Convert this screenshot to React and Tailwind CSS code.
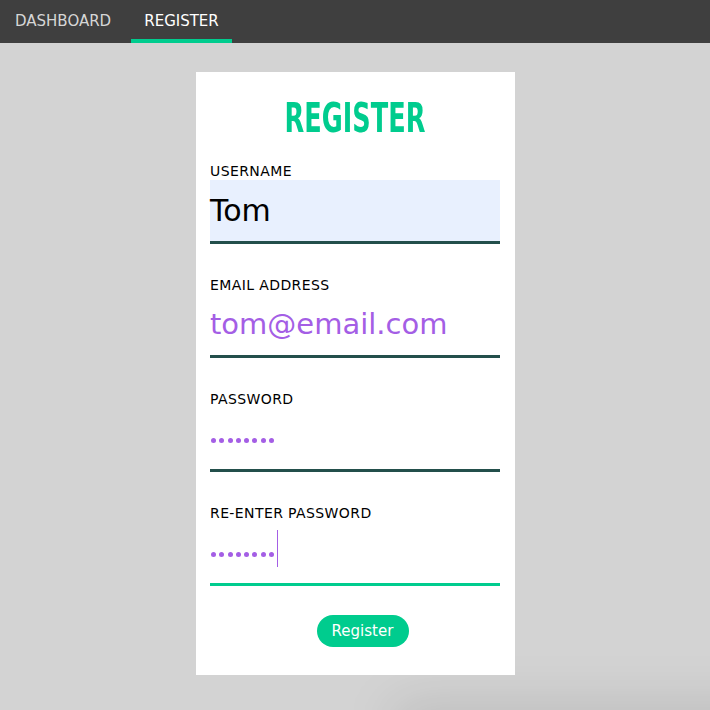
export default function App() {
  const fields = [
    { label: "USERNAME", value: "Tom", kind: "text", filled: true },
    { label: "EMAIL ADDRESS", value: "tom@email.com", kind: "email" },
    { label: "PASSWORD", kind: "password" },
    { label: "RE-ENTER PASSWORD", kind: "password", focused: true },
  ];

  return (
    <div className="relative min-h-[710px] overflow-hidden bg-[#d3d3d3] font-['DejaVu_Sans',sans-serif]">
      {/* faint shadow at bottom right */}
      <div className="absolute bottom-[-42px] right-[-60px] w-[380px] h-[50px] rounded-full bg-black/10 blur-xl" />

      {/* Top nav */}
      <nav className="relative h-[43px] bg-[#3f3f3f] flex text-[15px]">
        <a className="w-[131px] pl-[15px] flex items-center text-[#d6d6d6]">DASHBOARD</a>
        <a className="w-[101px] flex items-center justify-center text-white border-b-4 border-[#00cc8e] pt-1">
          REGISTER
        </a>
      </nav>

      {/* Register card */}
      <div className="relative w-[319px] h-[603px] mt-[29px] ml-[196px] bg-white pl-[14px] pr-[15px] flex flex-col">
        <h1 className="mt-[26px] h-[40px] leading-[40px] text-center text-[40px] font-bold text-[#00cc8e] scale-x-[0.64]">
          REGISTER
        </h1>
        <div className="mt-[24px] flex flex-col">
          {fields.map((f, i) => (
            <div key={f.label} className={i === 0 ? "" : "mt-[32px]"}>
              <div className="h-[18px] leading-[18px] text-[14px] tracking-[0.4px] text-black">{f.label}</div>
              <div
                className={
                  "h-[64px] border-b-[3px] flex items-center " +
                  (f.focused ? "border-[#00cc8e] " : "border-[#234f4b] ") +
                  (f.filled ? "bg-[#e8f0fe]" : "bg-white")
                }
              >
                {f.kind === "text" && <span className="text-[30px] text-black">{f.value}</span>}
                {f.kind === "email" && <span className="text-[29px] text-[#a45ee5]">{f.value}</span>}
                {f.kind === "password" && (
                  <span className="flex gap-[3.3px] pl-[1px] mt-[4px]">
                    {[0, 1, 2, 3, 4, 5, 6, 7].map((d) => (
                      <span key={d} className="w-[5px] h-[5px] rounded-full bg-[#a45ee5]" />
                    ))}
                  </span>
                )}
                {f.focused && <span className="w-px h-[37px] bg-[#a45ee5] ml-[3px] mt-[-8px]" />}
              </div>
            </div>
          ))}
        </div>
        <div className="mt-[29px] flex justify-center">
          <button className="ml-[15px] w-[92px] h-[32px] rounded-full bg-[#00cc8e] text-white text-[15px]">Register</button>
        </div>
      </div>
    </div>
  );
}
